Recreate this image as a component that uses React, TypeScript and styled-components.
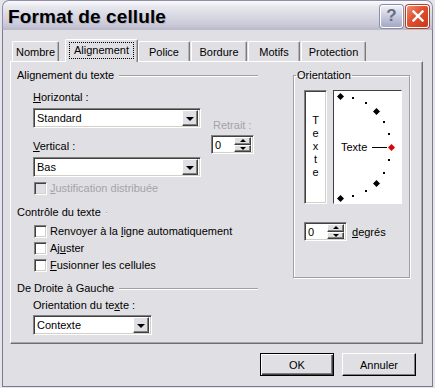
import React from "react";
import styled, { createGlobalStyle } from "styled-components";

const GlobalStyle = createGlobalStyle`
  html, body {
    margin: 0;
    padding: 0;
    background: #e4e4ea;
  }
  body {
    font-family: "Liberation Sans", Arial, sans-serif;
    font-size: 11px;
    color: #000;
  }
  #root {
    width: 435px;
    height: 388px;
    overflow: hidden;
  }
`;

const FACE = "#e0dfe3";

// sunken 2px border used by inputs, lists and checkboxes
const sunken = `
  border-top: 1px solid #808080;
  border-left: 1px solid #808080;
  border-right: 1px solid #ffffff;
  border-bottom: 1px solid #ffffff;
  box-shadow: inset 1px 1px 0 #404040, inset -1px -1px 0 #d4d0c8;
`;

const raised = `
  border-top: 1px solid #ffffff;
  border-left: 1px solid #ffffff;
  border-right: 1px solid #404040;
  border-bottom: 1px solid #404040;
  box-shadow: inset -1px -1px 0 #808080;
`;

const tabs = [
  { label: "Nombre", w: 47, ml: 0 },
  { label: "Alignement", w: 73, ml: 6, active: true },
  { label: "Police", w: 52, ml: 0 },
  { label: "Bordure", w: 56, ml: 1 },
  { label: "Motifs", w: 52, ml: 1 },
  { label: "Protection", w: 65, ml: 1 },
];

export default function App() {
  const cx = 6;
  const cy = 56;
  const r = 51;
  const rad = (a: number) => (a * Math.PI) / 180;
  const diamonds = [90, 45, 0, -45, -90];
  const dots = [75, 60, 30, 15, -15, -30, -60, -75];

  return (
    <>
      <GlobalStyle />
      <Window>
        <TitleBar>
          <Title>Format de cellule</Title>
          <TitleButtons>
            <HelpButton>?</HelpButton>
            <CloseButton>
              <svg width="12" height="12" viewBox="0 0 12 12">
                <path
                  d="M1.5 1.5 L10.5 10.5 M10.5 1.5 L1.5 10.5"
                  stroke="#fff"
                  strokeWidth="2.4"
                  strokeLinecap="square"
                />
              </svg>
            </CloseButton>
          </TitleButtons>
        </TitleBar>

        <Body>
          <TabStrip>
            {tabs.map((t) => (
              <Tab key={t.label} $w={t.w} $ml={t.ml} $active={!!t.active}>
                {t.active ? <Focus>{t.label}</Focus> : t.label}
              </Tab>
            ))}
          </TabStrip>

          <Panel>
            <LeftCol>
              <SectionHeader $w={241}>
                <span>Alignement du texte</span>
                <Rule />
              </SectionHeader>

              <AlignGrid>
                <FieldLabel>
                  <u>H</u>orizontal :
                </FieldLabel>
                <span />
                <Combo $w={168}>
                  <ComboText>Standard</ComboText>
                  <DropButton>
                    <Arrow />
                  </DropButton>
                </Combo>
                <RetraitCol>
                  <DisabledLabel>Retrait :</DisabledLabel>
                  <Spinner>
                    <SpinValue>0</SpinValue>
                    <SpinButtons>
                      <SpinBtn>
                        <SmallArrow $up />
                      </SpinBtn>
                      <SpinBtn>
                        <SmallArrow />
                      </SpinBtn>
                    </SpinButtons>
                  </Spinner>
                </RetraitCol>
                <FieldLabel $mt={11}>
                  <u>V</u>ertical :
                </FieldLabel>
                <span />
                <Combo $w={168} $mt={3}>
                  <ComboText>Bas</ComboText>
                  <DropButton>
                    <Arrow />
                  </DropButton>
                </Combo>
              </AlignGrid>

              <CheckRow $mt={5} $disabled>
                <CheckBox $disabled />
                <span>
                  <u>J</u>ustification distribuée
                </span>
              </CheckRow>

              <SectionHeader $w={90} $mt={10}>
                <span>Contrôle du texte</span>
                <Rule />
              </SectionHeader>

              <CheckRow $mt={6}>
                <CheckBox />
                <span>
                  Renvoyer à la <u>l</u>igne automatiquement
                </span>
              </CheckRow>
              <CheckRow $mt={4}>
                <CheckBox />
                <span>
                  Aj<u>u</u>ster
                </span>
              </CheckRow>
              <CheckRow $mt={4}>
                <CheckBox />
                <span>
                  <u>F</u>usionner les cellules
                </span>
              </CheckRow>

              <SectionHeader $w={241} $mt={9}>
                <span>De Droite à Gauche</span>
                <Rule />
              </SectionHeader>
              <FieldLabel $mt={3} $ml={16}>
                Orientation du te<u>x</u>te :
              </FieldLabel>
              <Combo $w={119} $mt={3} $ml={16}>
                <ComboText>Contexte</ComboText>
                <DropButton>
                  <Arrow />
                </DropButton>
              </Combo>
            </LeftCol>

            <OrientGroup>
              <legend>Orientation</legend>
              <OrientBoxes>
                <VerticalBox>
                  {"Texte".split("").map((c, i) => (
                    <span key={i}>{c}</span>
                  ))}
                </VerticalBox>
                <DialBox>
                  <svg width="67" height="112" viewBox="0 0 67 112">
                    <text
                      x="7"
                      y="60"
                      fontFamily="Liberation Sans, Arial, sans-serif"
                      fontSize="11"
                      fill="#000"
                    >
                      Texte
                    </text>
                    <line x1="38" y1="56.5" x2="53" y2="56.5" stroke="#000" strokeWidth="1" />
                    {dots.map((a) => {
                      const x = cx + r * Math.cos(rad(a));
                      const y = cy - r * Math.sin(rad(a));
                      return (
                        <rect
                          key={a}
                          x={Math.round(x) - 1}
                          y={Math.round(y) - 1}
                          width="2"
                          height="2"
                          fill="#000"
                        />
                      );
                    })}
                    {diamonds.map((a) => {
                      const x = Math.round(cx + r * Math.cos(rad(a))) + 0.5;
                      const y = Math.round(cy - r * Math.sin(rad(a))) + 0.5;
                      const s = 3.5;
                      return (
                        <polygon
                          key={a}
                          points={`${x},${y - s} ${x + s},${y} ${x},${y + s} ${x - s},${y}`}
                          fill={a === 0 ? "#e00000" : "#000"}
                        />
                      );
                    })}
                  </svg>
                </DialBox>
              </OrientBoxes>
              <DegreeRow>
                <Spinner>
                  <SpinValue>0</SpinValue>
                  <SpinButtons>
                    <SpinBtn>
                      <SmallArrow $up />
                    </SpinBtn>
                    <SpinBtn>
                      <SmallArrow />
                    </SpinBtn>
                  </SpinButtons>
                </Spinner>
                <span>
                  <u>d</u>egrés
                </span>
              </DegreeRow>
            </OrientGroup>
          </Panel>

          <ButtonRow>
            <PushButton $default>OK</PushButton>
            <PushButton>Annuler</PushButton>
          </ButtonRow>
        </Body>
      </Window>
    </>
  );
}

const Window = styled.div`
  margin-left: 2px;
  width: 431px;
  height: 387px;
  display: flex;
  flex-direction: column;
`;

const TitleBar = styled.div`
  height: 30px;
  flex: none;
  display: flex;
  align-items: center;
  justify-content: space-between;
  padding: 0 3px 0 5px;
  border-radius: 7px 7px 0 0;
  border: 1px solid #8e8ea6;
  border-bottom: none;
  box-sizing: border-box;
  background: linear-gradient(
    #fbfbfd 0%,
    #e8e8ef 18%,
    #d9d9e4 50%,
    #cbcbd9 80%,
    #b9b9cb 100%
  );
`;

const Title = styled.div`
  font-family: "Liberation Sans", Arial, sans-serif;
  font-weight: bold;
  font-size: 19px;
  letter-spacing: 0.1px;
  color: #000;
  padding-top: 3px;
  text-shadow: 1px 1px 0 rgba(120, 120, 140, 0.35);
`;

const TitleButtons = styled.div`
  display: flex;
  gap: 3px;
  padding-top: 1px;
`;

const HelpButton = styled.div`
  width: 21px;
  height: 21px;
  border: 1px solid #fff;
  border-radius: 3px;
  background: linear-gradient(#eef0f8, #b8bcd4 70%, #a4a8c4);
  box-shadow: 0 0 0 1px #8a8ea8;
  display: flex;
  align-items: center;
  justify-content: center;
  font-family: "Liberation Sans", Arial, sans-serif;
  font-weight: bold;
  font-size: 17px;
  color: #6a6c82;
`;

const CloseButton = styled.div`
  width: 21px;
  height: 21px;
  border: 1px solid #fff;
  border-radius: 3px;
  background: linear-gradient(135deg, #f08c70, #e0502c 45%, #c8381a);
  box-shadow: 0 0 0 1px #b04028;
  display: flex;
  align-items: center;
  justify-content: center;
`;

const Body = styled.div`
  flex: 1;
  display: flex;
  flex-direction: column;
  background: ${FACE};
  border: 1px solid #7a7a92;
  border-top: none;
  padding: 9px 0 0 7px;
`;

const TabStrip = styled.div`
  height: 22px;
  display: flex;
  align-items: flex-end;
  padding-left: 2px;
  position: relative;
  z-index: 1;
`;

const Tab = styled.div<{ $w: number; $ml: number; $active: boolean }>`
  box-sizing: border-box;
  width: ${(p) => p.$w}px;
  margin-left: ${(p) => p.$ml}px;
  height: ${(p) => (p.$active ? 23 : 20)}px;
  margin-bottom: ${(p) => (p.$active ? -1 : 0)}px;
  background: ${FACE};
  border-top: 1px solid #fff;
  border-left: 1px solid #fff;
  border-right: 1px solid #7a7a7a;
  border-radius: 2px 2px 0 0;
  box-shadow: inset -1px 0 0 #b4b4b8;
  display: flex;
  align-items: center;
  justify-content: center;
  padding-top: ${(p) => (p.$active ? 0 : 1)}px;
  padding-bottom: ${(p) => (p.$active ? 2 : 0)}px;
  white-space: nowrap;
`;

const Focus = styled.span`
  outline: 1px dotted #000;
  padding: 1px 4px 2px;
`;

const Panel = styled.div`
  box-sizing: border-box;
  width: 413px;
  height: 283px;
  border-top: 1px solid #fff;
  border-left: 1px solid #fff;
  border-right: 1px solid #6e6e6e;
  border-bottom: 1px solid #6e6e6e;
  box-shadow: inset -1px -1px 0 #a8a8ac;
  display: flex;
  align-items: flex-start;
  padding: 6px 0 0 6px;
`;

const LeftCol = styled.div`
  width: 241px;
  display: flex;
  flex-direction: column;
`;

const SectionHeader = styled.div<{ $w: number; $mt?: number }>`
  width: ${(p) => p.$w}px;
  height: 14px;
  margin-top: ${(p) => p.$mt ?? 0}px;
  display: flex;
  align-items: center;
  gap: 5px;
  white-space: nowrap;
`;

const Rule = styled.div`
  flex: 1;
  height: 0;
  border-top: 1px solid #a0a0a4;
  border-bottom: 1px solid #fff;
  margin-top: 1px;
`;

const AlignGrid = styled.div`
  display: grid;
  grid-template-columns: 168px 43px;
  column-gap: 10px;
  align-items: start;
  margin: 8px 0 0 16px;
`;

const FieldLabel = styled.div<{ $mt?: number; $ml?: number }>`
  height: 14px;
  line-height: 14px;
  margin-top: ${(p) => p.$mt ?? 0}px;
  margin-left: ${(p) => p.$ml ?? 0}px;
  white-space: nowrap;
`;

const DisabledLabel = styled.div`
  height: 14px;
  line-height: 14px;
  color: #a4a4a8;
  padding-left: 2px;
  white-space: nowrap;
`;

const RetraitCol = styled.div`
  grid-row: 2 / span 3;
  grid-column: 2;
  padding-top: 14px;
  display: flex;
  flex-direction: column;
  gap: 3px;
`;

const Combo = styled.div<{ $w: number; $mt?: number; $ml?: number }>`
  box-sizing: border-box;
  width: ${(p) => p.$w}px;
  height: 20px;
  margin-top: ${(p) => p.$mt ?? 4}px;
  margin-left: ${(p) => p.$ml ?? 0}px;
  background: #fff;
  ${sunken}
  display: flex;
  align-items: center;
  justify-content: space-between;
  padding: 2px 2px 2px 3px;
`;

const ComboText = styled.span`
  line-height: 14px;
`;

const DropButton = styled.div`
  box-sizing: border-box;
  width: 16px;
  height: 16px;
  background: ${FACE};
  ${raised}
  display: flex;
  align-items: center;
  justify-content: center;
`;

const Arrow = styled.div`
  width: 0;
  height: 0;
  border-left: 4px solid transparent;
  border-right: 4px solid transparent;
  border-top: 4px solid #000;
  margin-top: 1px;
`;

const Spinner = styled.div`
  box-sizing: border-box;
  width: 43px;
  height: 19px;
  background: #fff;
  ${sunken}
  display: flex;
  align-items: center;
  justify-content: space-between;
  padding: 2px 2px 2px 3px;
`;

const SpinValue = styled.span`
  line-height: 14px;
`;

const SpinButtons = styled.div`
  width: 17px;
  height: 15px;
  display: flex;
  flex-direction: column;
`;

const SpinBtn = styled.div`
  box-sizing: border-box;
  flex: 1;
  background: ${FACE};
  ${raised}
  display: flex;
  align-items: center;
  justify-content: center;
`;

const SmallArrow = styled.div<{ $up?: boolean }>`
  width: 0;
  height: 0;
  border-left: 3px solid transparent;
  border-right: 3px solid transparent;
  ${(p) =>
    p.$up ? "border-bottom: 3px solid #000;" : "border-top: 3px solid #000;"}
`;

const CheckRow = styled.div<{ $mt?: number; $disabled?: boolean }>`
  height: 13px;
  margin-top: ${(p) => p.$mt ?? 0}px;
  margin-left: 17px;
  display: flex;
  align-items: center;
  gap: 3px;
  line-height: 13px;
  white-space: nowrap;
  color: ${(p) => (p.$disabled ? "#a4a4a8" : "#000")};
`;

const CheckBox = styled.div<{ $disabled?: boolean }>`
  box-sizing: border-box;
  width: 13px;
  height: 13px;
  flex: none;
  background: ${(p) => (p.$disabled ? FACE : "#fff")};
  ${sunken}
`;

const OrientGroup = styled.fieldset`
  box-sizing: border-box;
  width: 117px;
  height: 210px;
  margin: 0 0 0 35px;
  padding: 0 0 0 10px;
  border: 1px solid #a0a0a4;
  box-shadow: inset 1px 1px 0 #fff, 1px 1px 0 #fff;
  min-width: 0;

  legend {
    padding: 0 1px;
    margin-left: -8px;
    line-height: 14px;
  }
`;

const OrientBoxes = styled.div`
  display: flex;
  gap: 6px;
  margin-top: 8px;
`;

const VerticalBox = styled.div`
  box-sizing: border-box;
  width: 23px;
  height: 114px;
  background: #fff;
  ${sunken}
  display: flex;
  flex-direction: column;
  align-items: center;
  justify-content: center;
  line-height: 13px;
  padding-bottom: 1px;
`;

const DialBox = styled.div`
  box-sizing: border-box;
  width: 69px;
  height: 114px;
  background: #fff;
  border-top: 1px solid #404040;
  border-left: 1px solid #404040;
  border-right: 1px solid #fff;
  border-bottom: 1px solid #fff;

  svg {
    display: block;
  }
`;

const DegreeRow = styled.div`
  display: flex;
  align-items: center;
  gap: 5px;
  margin-top: 18px;
`;

const ButtonRow = styled.div`
  display: flex;
  justify-content: flex-end;
  gap: 8px;
  margin-top: 9px;
  padding-right: 16px;
`;

const PushButton = styled.div<{ $default?: boolean }>`
  box-sizing: border-box;
  width: 74px;
  height: 23px;
  background: ${FACE};
  display: flex;
  align-items: center;
  justify-content: center;
  border: 1px solid ${(p) => (p.$default ? "#000" : "#fff")};
  border-right-color: #000;
  border-bottom-color: #000;
  box-shadow: ${(p) =>
    p.$default
      ? "inset 1px 1px 0 #fff, inset -1px -1px 0 #404040, inset -2px -2px 0 #808080"
      : "inset -1px -1px 0 #808080"};
`;
